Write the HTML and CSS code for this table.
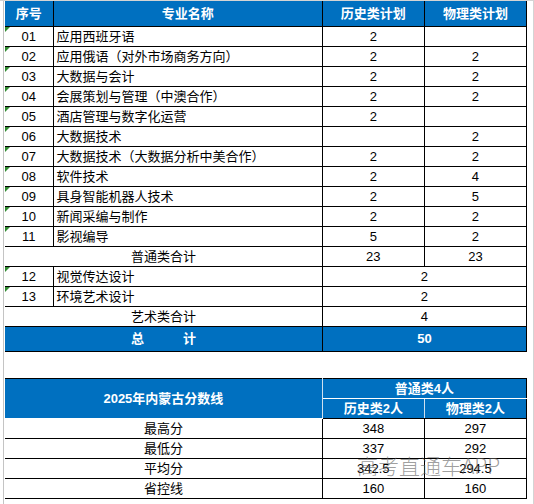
FILE: index.html
```html
<!DOCTYPE html>
<html lang="zh-CN">
<head>
  <meta charset="UTF-8">
  <meta name="viewport" content="width=device-width, initial-scale=1.0">
  <title>2025 招生计划</title>
  <link rel="stylesheet" href="styles.css">
</head>
<body>
  <div class="sheet">
    <table class="plan">
      <colgroup>
        <col class="c-no"><col class="c-name"><col class="c-num"><col class="c-num">
      </colgroup>
      <thead>
        <tr class="head"><th>序号</th><th>专业名称</th><th>历史类计划</th><th>物理类计划</th></tr>
      </thead>
      <tbody>
        <tr><td class="no">01</td><td class="name">应用西班牙语</td><td>2</td><td></td></tr>
        <tr><td class="no">02</td><td class="name">应用俄语（对外市场商务方向）</td><td>2</td><td>2</td></tr>
        <tr><td class="no">03</td><td class="name">大数据与会计</td><td>2</td><td>2</td></tr>
        <tr><td class="no">04</td><td class="name">会展策划与管理（中澳合作）</td><td>2</td><td>2</td></tr>
        <tr><td class="no">05</td><td class="name">酒店管理与数字化运营</td><td>2</td><td></td></tr>
        <tr><td class="no">06</td><td class="name">大数据技术</td><td></td><td>2</td></tr>
        <tr><td class="no">07</td><td class="name">大数据技术（大数据分析中美合作）</td><td>2</td><td>2</td></tr>
        <tr><td class="no">08</td><td class="name">软件技术</td><td>2</td><td>4</td></tr>
        <tr><td class="no">09</td><td class="name">具身智能机器人技术</td><td>2</td><td>5</td></tr>
        <tr><td class="no">10</td><td class="name">新闻采编与制作</td><td>2</td><td>2</td></tr>
        <tr><td class="no">11</td><td class="name">影视编导</td><td>5</td><td>2</td></tr>
        <tr><td colspan="2">普通类合计</td><td>23</td><td>23</td></tr>
        <tr><td class="no">12</td><td class="name">视觉传达设计</td><td colspan="2">2</td></tr>
        <tr><td class="no">13</td><td class="name">环境艺术设计</td><td colspan="2">2</td></tr>
        <tr><td colspan="2">艺术类合计</td><td colspan="2">4</td></tr>
        <tr class="total"><td colspan="2">总&emsp;&emsp;&emsp;计</td><td colspan="2">50</td></tr>
      </tbody>
    </table>

    <div class="spacer"></div>

    <table class="scores">
      <colgroup>
        <col class="c-no"><col class="c-name"><col class="c-num"><col class="c-num">
      </colgroup>
      <thead>
        <tr class="head"><th colspan="2" rowspan="2">2025年内蒙古分数线</th><th colspan="2">普通类4人</th></tr>
        <tr class="head"><th>历史类2人</th><th>物理类2人</th></tr>
      </thead>
      <tbody>
        <tr><td colspan="2">最高分</td><td>348</td><td>297</td></tr>
        <tr><td colspan="2">最低分</td><td>337</td><td>292</td></tr>
        <tr><td colspan="2">平均分</td><td>342.5</td><td>294.5</td></tr>
        <tr><td colspan="2">省控线</td><td>160</td><td>160</td></tr>
      </tbody>
    </table>

    <div class="watermark">高考直通车APP</div>
  </div>
</body>
</html>
```

FILE: styles.css
```css
:root {
  --blue: #0070C0;
  --grid: #d4d4d4;
  --tick: #2f8a2f;
}

body {
  margin: 0;
  background: #fff;
  color: #000;
  font-family: "Liberation Sans", "Noto Sans CJK SC", sans-serif;
  font-size: 13px;
}

.sheet {
  position: relative;
  width: 534px;
  height: 504px;
  box-sizing: border-box;
  padding-left: 5px;
  border-top: 1px solid var(--grid);
  border-right: 1px solid var(--grid);
  overflow: hidden;
}

/* excel row-header gridline on the left */
.sheet::before {
  content: "";
  position: absolute;
  left: 3px;
  top: 0;
  bottom: 0;
  width: 1px;
  background: #c4c4c4;
}

table {
  border-collapse: collapse;
  table-layout: fixed;
  width: 522px;
}

.c-no { width: 48px; }
.c-name { width: 269px; }
.c-num { width: 102px; }

th, td {
  border: 1px solid #000;
  padding: 0;
  height: 19px;
  line-height: 19px;
  text-align: center;
  white-space: nowrap;
  overflow: hidden;
}

tr > :first-child {
  border-left: none;
}

.head th {
  background: var(--blue);
  color: #fff;
  font-weight: bold;
}

.plan .head th {
  height: 25px;
  line-height: 25px;
  border-top: none;
}

td.no {
  position: relative;
}

/* green "number stored as text" marker */
td.no::before {
  content: "";
  position: absolute;
  left: 0;
  top: 0;
  border-top: 5px solid var(--tick);
  border-right: 5px solid transparent;
}

td.name {
  text-align: left;
  padding-left: 3px;
}

.total td {
  height: 24px;
  line-height: 24px;
  background: var(--blue);
  color: #fff;
  font-weight: bold;
}

.spacer {
  height: 26px;
}

.scores .head th {
  border-color: #fff;
  border-top-color: #000;
  border-right-color: #000;
}

.scores .head th[rowspan] {
  border-right-color: #cfe0ef;
}

.scores .head + .head th {
  border-top-color: #cfe0ef;
  border-bottom-color: #000;
}

.scores .head + .head th:first-child {
  border-right-color: #cfe0ef;
}

.watermark {
  position: absolute;
  left: 357px;
  top: 449px;
  font-size: 21px;
  color: rgba(95, 95, 95, 0.62);
  font-family: "Noto Sans CJK SC", sans-serif;
  font-weight: 300;
  pointer-events: none;
}
```
